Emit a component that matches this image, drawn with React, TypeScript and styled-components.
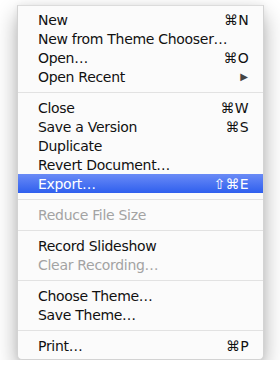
import React from "react"
import styled, {createGlobalStyle} from "styled-components"

const GlobalStyle = createGlobalStyle`
html, body {
  margin: 0;
  padding: 0;
  background: #ffffff;
}
`

interface MenuEntry {
  label?: string;
  shortcut?: string;
  submenu?: boolean;
  disabled?: boolean;
  active?: boolean;
  separator?: boolean;
}

const entries: MenuEntry[] = [
  {label: "New", shortcut: "⌘N"},
  {label: "New from Theme Chooser…"},
  {label: "Open…", shortcut: "⌘O"},
  {label: "Open Recent", submenu: true},
  {separator: true},
  {label: "Close", shortcut: "⌘W"},
  {label: "Save a Version", shortcut: "⌘S"},
  {label: "Duplicate"},
  {label: "Revert Document…"},
  {label: "Export…", shortcut: "⇧⌘E", active: true},
  {separator: true},
  {label: "Reduce File Size", disabled: true},
  {separator: true},
  {label: "Record Slideshow"},
  {label: "Clear Recording…", disabled: true},
  {separator: true},
  {label: "Choose Theme…"},
  {label: "Save Theme…"},
  {separator: true},
  {label: "Print…", shortcut: "⌘P"},
]

// page holding the dropdown
const Page = styled.div`
padding: 5px 16px 0 17px;
`

const Menu = styled.ul`
list-style: none;
margin: 0;
width: 245px;
padding: 4px 0 4px;
background: #fbfbfb;
border: 1px solid #d3d3d3;
border-top-color: #dcdcdc;
border-radius: 0 0 5px 5px;
box-shadow: 0 10px 22px rgba(0, 0, 0, 0.32), 0 0 6px rgba(0, 0, 0, 0.06);
font-family: "DejaVu Sans", "Liberation Sans", sans-serif;
font-size: 14px;
`

interface ItemProps {
  $disabled?: boolean;
  $active?: boolean;
}

const Item = styled.li<ItemProps>`
display: flex;
align-items: center;
height: 19px;
padding: 0 14px 0 20px;
color: ${props => props.$active ? "#ffffff" : props.$disabled ? "#a3a3a3" : "#111111"};
background: ${props => props.$active ? "linear-gradient(#6a8bf6, #2f5fee)" : "transparent"};
white-space: nowrap;
`

const Label = styled.span`
flex: 1;
letter-spacing: -0.3px;
`

const Shortcut = styled.span`
letter-spacing: 0.3px;
`

const Arrow = styled.span`
font-size: 10px;
color: #444444;
margin-right: 1px;
`

const Separator = styled.li`
height: 12px;
display: flex;
align-items: center;
&::after {
  content: "";
  flex: 1;
  height: 1px;
  background: #e2e2e2;
}
`

const App = () => {
  return (
    <>
      <GlobalStyle />
      <Page>
        <Menu>
          {entries.map((entry, i) => {
            if (entry.separator) return <Separator key={i} />
            return (
              <Item key={i} $disabled={entry.disabled} $active={entry.active}>
                <Label>{entry.label}</Label>
                {entry.shortcut && <Shortcut>{entry.shortcut}</Shortcut>}
                {entry.submenu && <Arrow>▶</Arrow>}
              </Item>
            )
          })}
        </Menu>
      </Page>
    </>
  )
}

export default App
